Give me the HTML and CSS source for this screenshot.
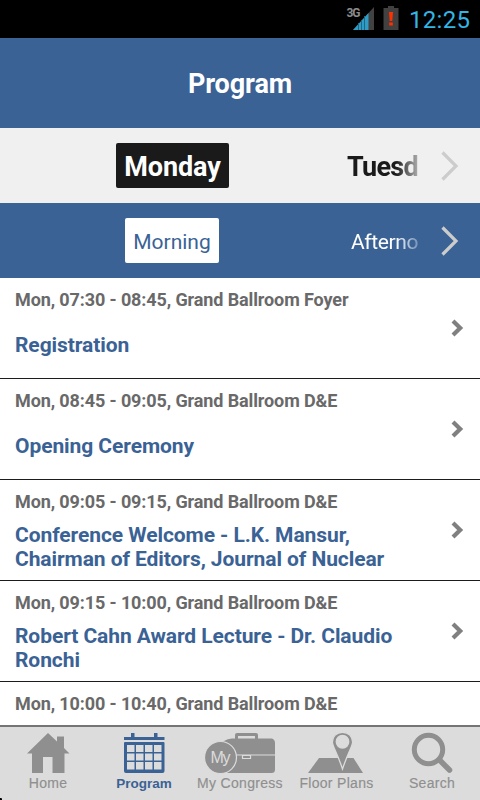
FILE: index.html
```html
<!DOCTYPE html>
<html lang="en">
<head>
<meta charset="utf-8">
<title>Program</title>
<link rel="stylesheet" href="styles.css">
</head>
<body>
<div class="status">
  <svg class="signal" width="30" height="26" viewBox="0 0 30 26">
    <path d="M7 26L28 3V26Z" fill="#414141"/>
    <path d="M7 26L22.500 9V26Z" fill="#2f9cc5"/>
    <path d="M12.500 19V26M15.500 16V26M18.500 12V26" stroke="#1f6685" stroke-width="1"/>
    <text x="0.500" y="13" class="network" textLength="14">3G</text>
  </svg>
  <svg class="battery" width="16" height="24" viewBox="0 0 16 24">
    <path d="M5 0h6v2h4.500v22H.500V2H5z" fill="#414141"/>
    <path d="M6 6h4l-.7 9H6.700zM6.200 16.500h3.600v3H6.200z" fill="#ff3000"/>
  </svg>
  <span class="clock">12:25</span>
</div>
<header class="header"><h1>Program</h1></header>
<div class="picker days">
  <span class="chip day-active">Monday</span>
  <span class="next">Tuesd</span>
  <svg class="arrow" width="18" height="30" viewBox="0 0 18 30"><path d="M1.500 1.500L15 15L1.500 28.500"/></svg>
</div>
<div class="picker times">
  <span class="chip time-active">Morning</span>
  <span class="next">Afterno</span>
  <svg class="arrow" width="18" height="30" viewBox="0 0 18 30"><path d="M1.500 1.500L15 15L1.500 28.500"/></svg>
</div>
<main class="list">
  <article class="row">
    <p class="meta">Mon, 07:30 - 08:45, Grand Ballroom Foyer</p>
    <div class="title"><h2>Registration</h2></div>
    <svg class="chev" width="14" height="20" viewBox="0 0 14 20"><path d="M3 3L10.200 10L3 17"/></svg>
  </article>
  <article class="row">
    <p class="meta">Mon, 08:45 - 09:05, Grand Ballroom D&amp;E</p>
    <div class="title"><h2>Opening Ceremony</h2></div>
    <svg class="chev" width="14" height="20" viewBox="0 0 14 20"><path d="M3 3L10.200 10L3 17"/></svg>
  </article>
  <article class="row">
    <p class="meta">Mon, 09:05 - 09:15, Grand Ballroom D&amp;E</p>
    <div class="title"><h2>Conference Welcome - L.K. Mansur,<br>Chairman of Editors, Journal of Nuclear</h2></div>
    <svg class="chev" width="14" height="20" viewBox="0 0 14 20"><path d="M3 3L10.200 10L3 17"/></svg>
  </article>
  <article class="row">
    <p class="meta">Mon, 09:15 - 10:00, Grand Ballroom D&amp;E</p>
    <div class="title"><h2>Robert Cahn Award Lecture - Dr. Claudio<br>Ronchi</h2></div>
    <svg class="chev" width="14" height="20" viewBox="0 0 14 20"><path d="M3 3L10.200 10L3 17"/></svg>
  </article>
  <article class="row">
    <p class="meta">Mon, 10:00 - 10:40, Grand Ballroom D&amp;E</p>
  </article>
</main>
<nav class="tabs">
  <a class="tab">
    <svg width="96" height="50" viewBox="0 0 96 50"><path d="M48 6L57 14.500V9.500H64V21L69.500 26.500H64.500V46H52.500V30H43V46H32V26.500H27Z"/></svg>
    <span>Home</span>
  </a>
  <a class="tab active">
    <svg width="96" height="50" viewBox="0 0 96 50">
      <path d="M28 10h7V6h3.500v4H58V6h3.500v4h7v3H28z"/>
      <path fill-rule="evenodd" d="M29 15H67.500Q68.500 15 68.500 16V44Q68.500 46 66.500 46H30Q28 46 28 44V16Q28 15 29 15ZM31 18V25H38.500V18ZM40 18V25H47.500V18ZM49 18V25H56.500V18ZM58 18V25H65.500V18ZM31 26.500V33.500H38.500V26.500ZM40 26.500V33.500H47.500V26.500ZM49 26.500V33.500H56.500V26.500ZM58 26.500V33.500H65.500V26.500ZM31 35V42.500H38.500V35ZM40 35V42.500H47.500V35ZM49 35V42.500H56.500V35ZM58 35V42.500H65.500V35Z"/>
    </svg>
    <span>Program</span>
  </a>
  <a class="tab">
    <svg width="96" height="50" viewBox="0 0 96 50">
      <path d="M43 12V8Q43 6 45 6H64Q66 6 66 8V12H63V9H46V12Z"/>
      <path d="M31 14.500Q36 11.500 40 11.500H80Q83 12.500 83 16V42.500Q83 46 79.500 46H34Z"/>
      <path d="M43 28H83" stroke="#dcdcdc" stroke-width="1"/>
      <path d="M50.500 28.500H58.500V31.500H50.500Z" stroke="#dcdcdc" stroke-width="1.200"/>
      <circle cx="28.500" cy="30.500" r="16" stroke="#dcdcdc" stroke-width="1.200"/>
      <text x="18.500" y="36" class="my" textLength="20">My</text>
    </svg>
    <span>My Congress</span>
  </a>
  <a class="tab">
    <svg width="96" height="50" viewBox="0 0 96 50">
      <path d="M31 31H65.500L75 46H20Z"/>
      <path fill-rule="evenodd" stroke="#dcdcdc" stroke-width="1.300" d="M54.500 5.300C60.500 5.300 64.600 9.700 64.600 15C64.600 19.500 60.500 24 54.500 42C48.500 24 44.400 19.500 44.400 15C44.400 9.700 48.500 5.300 54.500 5.300ZM54.500 8.500A6.200 6.200 0 1 0 54.500 21A6.200 6.200 0 1 0 54.500 8.500Z"/>
    </svg>
    <span class="wide">Floor Plans</span>
  </a>
  <a class="tab">
    <svg width="96" height="50" viewBox="0 0 96 50">
      <circle cx="44.500" cy="22.500" r="14.200" fill="none" stroke="#8f8f8f" stroke-width="5"/>
      <path d="M56 33.500L65.500 43" stroke="#8f8f8f" stroke-width="5.500" stroke-linecap="round"/>
    </svg>
    <span>Search</span>
  </a>
</nav>
</body>
</html>
```
FILE: styles.css
```css
* { box-sizing: border-box; margin: 0; padding: 0; }
body {
  width: 480px; height: 800px; overflow: hidden;
  display: flex; flex-direction: column;
  font-family: Roboto, sans-serif; background: #fff;
}
.status {
  height: 38px; flex: none; background: #000;
  display: flex; align-items: flex-start; padding-left: 346px;
}
.signal { margin-top: 4px; }
.network { font: bold 12px Roboto, sans-serif; fill: #8c8c8c; }
.battery { margin: 6px 0 0 7px; }
.clock { margin: 5px 0 0 10px; font-size: 24px; line-height: 30px; letter-spacing: .3px; color: #33b5e5; white-space: nowrap; }
.header {
  height: 90px; flex: none; background: #3a6295; color: #fff;
  display: flex; align-items: center; justify-content: center;
}
h1 { font-size: 27px; line-height: 32px; font-weight: bold; padding-top: 1px; letter-spacing: -.1px; }
.picker { height: 75px; flex: none; display: flex; align-items: center; }
.days { background: #f0f0f0; padding-left: 116px; }
.times { background: #3a6295; padding-left: 125px; }
.chip { height: 45px; line-height: 48px; border-radius: 2px; text-align: center; flex: none; }
.day-active { width: 113px; background: #1a1a1a; color: #fff; font-size: 27px; font-weight: bold; letter-spacing: -.1px; }
.time-active { width: 94px; background: #fff; color: #3a6295; font-size: 21px; }
.next {
  flex: none; white-space: nowrap; line-height: 45px; padding-top: 3px;
  -webkit-mask-image: linear-gradient(to right, #000 calc(100% - 24px), rgba(0, 0, 0, .25));
  mask-image: linear-gradient(to right, #000 calc(100% - 24px), rgba(0, 0, 0, .25));
}
.days .next { margin-left: 118px; width: 73px; font-size: 27px; font-weight: bold; color: #1a1a1a; letter-spacing: -.7px; }
.times .next { margin-left: 132px; width: 69px; font-size: 21px; color: #fff; letter-spacing: -.35px; }
.arrow { margin-left: 21px; flex: none; }
.arrow path { fill: none; stroke: #ccc; stroke-width: 3.200; }
.list { flex: 1; min-height: 0; overflow: hidden; }
.row {
  height: 101px; border-bottom: 1px solid #1c1c1c; padding-left: 15px;
  display: grid; grid-template-columns: 435px 1fr; grid-template-rows: 43px 57px;
}
.meta {
  grid-column: 1; grid-row: 1; font-size: 18px; line-height: 22px; font-weight: bold;
  color: #696969; padding-top: 11px; white-space: nowrap; letter-spacing: -.11px;
}
.title { grid-column: 1; grid-row: 2; height: 48px; display: flex; align-items: center; }
h2 { font-size: 21px; line-height: 24px; font-weight: bold; color: #3a6295; white-space: nowrap; letter-spacing: -.08px; }
.chev { grid-column: 2; grid-row: 1 / 3; align-self: center; }
.chev path { fill: none; stroke: #808080; stroke-width: 4.200; }
.tabs {
  height: 75px; flex: none; background: #dcdcdc; border-top: 2px solid #757575;
  display: flex;
}
.tab {
  width: 96px; display: flex; flex-direction: column; align-items: center;
  color: #8f8f8f; fill: #8f8f8f;
  font: 14px/17px "Liberation Sans", sans-serif; white-space: nowrap; letter-spacing: .3px;
}
.tab svg { flex: none; }
.tab span { margin-top: -2px; -webkit-text-stroke: .15px currentColor; }
.tab .wide { padding-left: 1px; }
.tab.active { color: #3a6295; fill: #3a6295; font-weight: bold; font-size: 13.500px; letter-spacing: 0; }
.tab.active span { -webkit-text-stroke: 0; }
.my { font: 16px "Liberation Sans", sans-serif; fill: #dcdcdc; letter-spacing: 0; }
.tabs {
  background-image: radial-gradient(circle at 0 100%, #000 2px, transparent 2.500px);
}
```
